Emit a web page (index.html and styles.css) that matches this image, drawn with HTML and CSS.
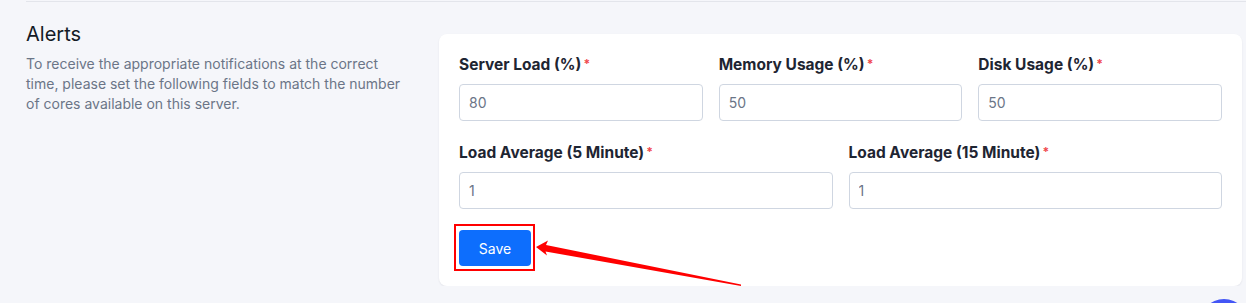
FILE: index.html
```html
<!DOCTYPE html>
<html lang="en">
<head>
  <meta charset="UTF-8" />
  <meta name="viewport" content="width=device-width, initial-scale=1.0"/>
  <title>Server Settings - Alerts</title>
  <link rel="stylesheet" href="styles.css">
</head>
<body>

  <!-- Divider from the previous settings block -->
  <div class="top-rule"></div>

  <!-- Alerts settings -->
  <section class="settings-row">
    <div class="intro">
      <h2>Alerts</h2>
      <p>To receive the appropriate notifications at the correct time, please set the following fields to match the number of cores available on this server.</p>
    </div>

    <form class="card" onsubmit="event.preventDefault()">
      <div class="fields cols-3">
        <label class="field">
          <span class="label">Server Load (%)<span class="req">*</span></span>
          <input type="text" value="80">
        </label>
        <label class="field">
          <span class="label">Memory Usage (%)<span class="req">*</span></span>
          <input type="text" value="50">
        </label>
        <label class="field">
          <span class="label">Disk Usage (%)<span class="req">*</span></span>
          <input type="text" value="50">
        </label>
      </div>

      <div class="fields cols-2">
        <label class="field">
          <span class="label">Load Average (5 Minute)<span class="req">*</span></span>
          <input type="text" value="1">
        </label>
        <label class="field">
          <span class="label">Load Average (15 Minute)<span class="req">*</span></span>
          <input type="text" value="1">
        </label>
      </div>

      <span class="marked">
        <button type="submit" class="btn-save">Save</button>
      </span>

      <!-- Annotation arrow -->
      <svg class="arrow" width="215" height="52" viewBox="0 0 215 52">
        <polygon points="6,11 18,4.5 16,9 211,48.5 211,50 15.5,15.5 17,19.5" fill="#ff0000"/>
      </svg>
    </form>
  </section>

  <!-- Chat launcher -->
  <div class="chat-bubble"></div>

</body>
</html>
```

FILE: styles.css
```css
body {
  margin: 0;
  background-color: #f5f6fa;
  font-family: "Inter", "Lato", sans-serif;
  color: #1e2532;
}
.top-rule {
  margin: 1px 0 0 26px;
  border-top: 1px solid #e3e5eb;
}
.settings-row {
  display: flex;
  gap: 35px;
  align-items: flex-start;
  padding: 18px 4px 0 26px;
}
.intro {
  flex: 0 0 378px;
}
.intro h2 {
  margin: 0;
  font-size: 20px;
  font-weight: 400;
  line-height: 28px;
  color: #141a26;
}
.intro p {
  margin: 6px 0 0;
  font-size: 14px;
  line-height: 20px;
  color: #6b7587;
}
.card {
  position: relative;
  flex: 1;
  margin-top: 14px;
  padding: 20px;
  background-color: #fff;
  border-radius: 8px;
  box-shadow: 0 1px 2px rgba(20, 30, 50, 0.08);
}
.fields {
  display: grid;
  column-gap: 16px;
  margin-bottom: 21px;
}
.cols-3 {
  grid-template-columns: repeat(3, 1fr);
}
.cols-2 {
  grid-template-columns: repeat(2, 1fr);
}
.field {
  display: block;
}
.label {
  display: block;
  margin-bottom: 9px;
  font-size: 15.5px;
  font-weight: 700;
  line-height: 20px;
  color: #1e2532;
}
.req {
  margin-left: 2px;
  color: #f0474b;
  font-size: 12px;
  vertical-align: 2px;
}
.field input {
  display: block;
  box-sizing: border-box;
  width: 100%;
  height: 37px;
  padding: 0 9px;
  border: 1px solid #cfd6e1;
  border-radius: 4px;
  font-family: inherit;
  font-size: 14px;
  color: #6b7587;
  background: #fff;
}
.marked {
  position: relative;
  display: inline-block;
}
.marked::after {
  content: "";
  position: absolute;
  top: -6px;
  left: -5px;
  right: -4px;
  bottom: -5px;
  border: 2px solid #ff0000;
}
.btn-save {
  display: block;
  width: 72px;
  height: 36px;
  border: none;
  border-radius: 4px;
  background-color: #0d6efd;
  color: #fff;
  font-family: inherit;
  font-size: 14px;
  font-weight: 400;
}
.arrow {
  position: absolute;
  left: 91px;
  top: 202px;
}
.chat-bubble {
  position: fixed;
  right: -3px;
  bottom: -46px;
  width: 50px;
  height: 50px;
  border-radius: 50%;
  background-color: #4356f5;
}
```
